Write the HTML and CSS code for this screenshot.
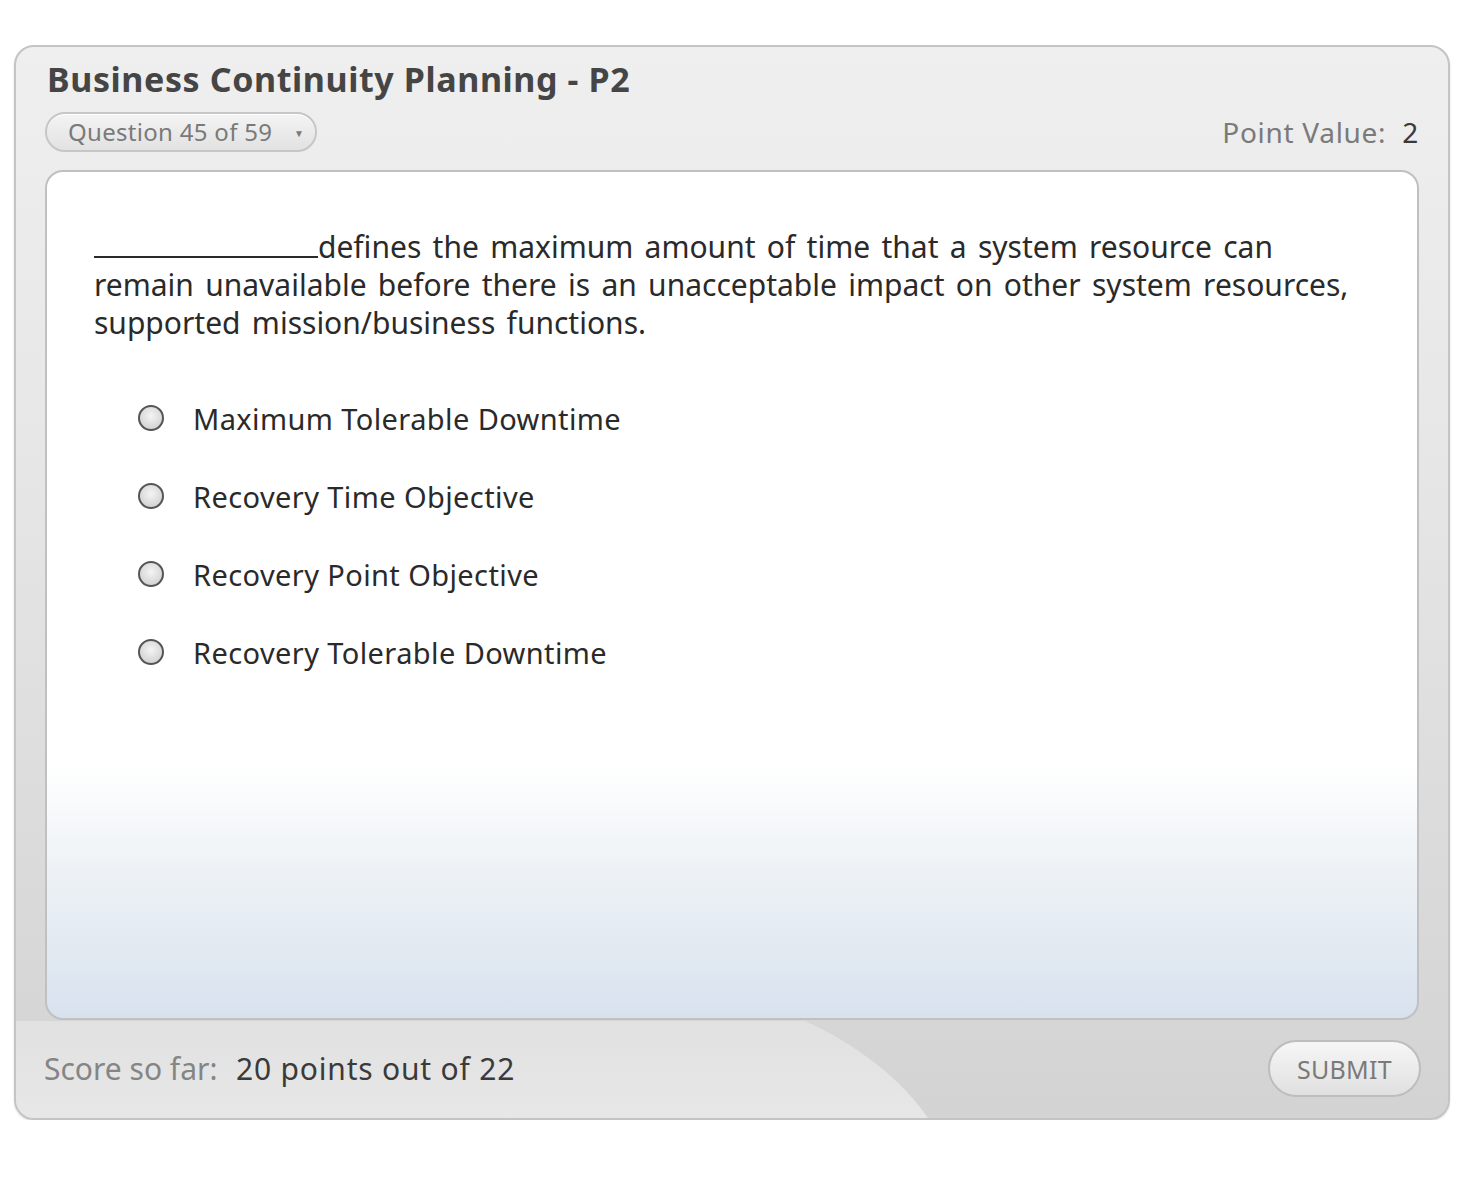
FILE: index.html
```html
<!DOCTYPE html>
<html>
<head>
<meta charset="utf-8">
<link rel="stylesheet" href="styles.css">
</head>
<body>
<div class="card">
  <svg class="swoosh" viewBox="0 0 1436 98" preserveAspectRatio="none" aria-hidden="true">
    <defs>
      <linearGradient id="lg" x1="0" y1="0" x2="0" y2="1">
        <stop offset="0" stop-color="#e1e1e1"/>
        <stop offset="1" stop-color="#e7e7e7"/>
      </linearGradient>
    </defs>
    <path d="M0 0 L789 0 C842 24 886 60 912 98 L0 98 Z" fill="url(#lg)"/>
  </svg>
  <h1 class="title">Business Continuity Planning - P2</h1>
  <div class="meta">
    <div class="qpill">Question 45 of 59 <span class="caret">&#9660;</span></div>
    <div class="points">Point Value:&nbsp; <span class="pv">2</span></div>
  </div>
  <div class="panel">
    <p class="question"><span class="blank"></span>defines the maximum amount of time that a system resource can remain unavailable before there is an unacceptable impact on other system resources, supported mission/business functions.</p>
    <ul class="options">
      <li class="option"><span class="radio"></span><span class="label">Maximum Tolerable Downtime</span></li>
      <li class="option"><span class="radio"></span><span class="label">Recovery Time Objective</span></li>
      <li class="option"><span class="radio"></span><span class="label">Recovery Point Objective</span></li>
      <li class="option"><span class="radio"></span><span class="label">Recovery Tolerable Downtime</span></li>
    </ul>
  </div>
  <div class="footer">
    <div class="score"><span class="slabel">Score so far:</span>&nbsp; <span class="sval">20 points out of 22</span></div>
    <button class="submit">SUBMIT</button>
  </div>
</div>
</body>
</html>
```

FILE: styles.css
```css
html, body {
  margin: 0;
  padding: 0;
  background: #ffffff;
}
body {
  font-family: "Noto Sans", "Open Sans", sans-serif;
  padding: 45px 14px 0 14px;
  width: 1436px;
}
.card {
  position: relative;
  box-sizing: border-box;
  width: 1436px;
  height: 1075px;
  border: 2px solid #c4c4c4;
  border-radius: 20px;
  background: linear-gradient(#efefef 0%, #e6e6e6 40%, #d9d9d9 80%, #d3d3d3 100%);
  padding: 0 29px 0 29px;
  overflow: hidden;
  box-shadow: 0 1px 2px rgba(0,0,0,0.15);
}
.swoosh {
  position: absolute;
  left: 0;
  bottom: 0;
  width: 1436px;
  height: 97px;
}
.title {
  position: relative;
  margin: 10px 0 0 2px;
  font-size: 34px;
  font-weight: bold;
  color: #454545;
  line-height: 44px;
  letter-spacing: 0.6px;
}
.meta {
  position: relative;
  display: flex;
  justify-content: space-between;
  align-items: center;
  margin-top: 10px;
  height: 42px;
}
.qpill {
  box-sizing: border-box;
  height: 40px;
  width: 272px;
  border: 2px solid #c6c6c6;
  border-radius: 20px;
  background: linear-gradient(#f4f4f4, #e2e2e2);
  color: #7a7a7a;
  font-size: 24px;
  line-height: 36px;
  padding-left: 21px;
  letter-spacing: 0.3px;
  box-shadow: inset 0 1px 0 #fff;
}
.caret {
  font-size: 10px;
  vertical-align: 4px;
  margin-left: 15px;
}
.points {
  font-size: 28px;
  color: #7a7a7a;
  letter-spacing: 0.7px;
}
.pv { color: #3a3a3a; }
.panel {
  position: relative;
  box-sizing: border-box;
  margin-top: 17px;
  height: 850px;
  border: 2px solid #c0c0c0;
  border-radius: 18px;
  background: linear-gradient(#ffffff 0%, #ffffff 70%, #eef2f6 82%, #d8e2ee 100%);
  padding: 56px 56px 0 47px;
}
.question {
  margin: 0;
  font-size: 30px;
  line-height: 38px;
  color: #2a2a2a;
  word-spacing: 3.5px;
}
.blank {
  display: inline-block;
  width: 224px;
  border-bottom: 2px solid #2a2a2a;
  height: 28px;
  vertical-align: baseline;
}
.options {
  list-style: none;
  margin: 37px 0 0 0;
  padding: 0 0 0 44px;
}
.option {
  display: flex;
  align-items: center;
  height: 78px;
}
.radio {
  box-sizing: border-box;
  width: 26px;
  height: 26px;
  border-radius: 50%;
  border: 2px solid #555;
  background: radial-gradient(circle at 50% 40%, #f4f4f4 0%, #d6d6d6 70%, #c8c8c8 100%);
  margin-right: 29px;
  flex: none;
}
.label {
  font-size: 29px;
  color: #2a2a2a;
  letter-spacing: 0.4px;
}
.footer {
  position: relative;
  display: flex;
  justify-content: space-between;
  align-items: center;
  margin-top: 20px;
}
.score {
  font-size: 30px;
  margin-left: -1px;
}
.slabel { color: #858585; }
.sval { color: #3a3a3a; letter-spacing: 0.8px; margin-left: 3px; }
.submit {
  box-sizing: border-box;
  width: 153px;
  height: 57px;
  border: 2px solid #bdbdbd;
  border-radius: 29px;
  background: linear-gradient(#f6f6f6, #e0e0e0);
  color: #7a7a7a;
  font-family: inherit;
  font-size: 25px;
  letter-spacing: 0.3px;
  margin-right: -2px;
}
```
